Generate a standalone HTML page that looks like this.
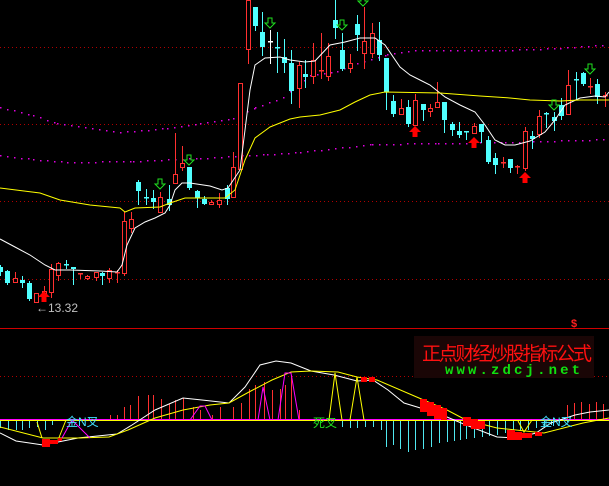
<!DOCTYPE html>
<html><head><meta charset="utf-8"><style>
html,body{margin:0;padding:0;background:#000;width:609px;height:486px;overflow:hidden}
svg{display:block}
</style></head><body>
<svg id="s" width="609" height="486" xmlns="http://www.w3.org/2000/svg" style="background:#000">
<g stroke="#b00000" stroke-width="1" stroke-dasharray="1,3">
<line x1="0" y1="47.5" x2="609" y2="47.5"/><line x1="0" y1="124.5" x2="609" y2="124.5"/>
<line x1="0" y1="201.5" x2="609" y2="201.5"/><line x1="0" y1="279.5" x2="609" y2="279.5"/>
<line x1="0" y1="376.5" x2="414" y2="376.5"/><line x1="594" y1="376.5" x2="609" y2="376.5"/>
</g>
<g id="mag" fill="#e000e0"></g>
<g id="cand"></g>
<polyline fill="none" stroke="#ffffff" stroke-width="1" points="0,239 15,247 30,255 45,265 55,270 70,270 100,271 117,272 122,265 127,245 135,228 145,222 155,218 165,213 170,205 175,190 182,183 190,183 210,186 222,190 228,188 240,170 245,130 250,90 255,65 265,58 280,57 290,60 305,62 315,61 330,45 345,42 360,38 375,38 385,45 400,67 410,75 420,80 430,85 445,97 460,105 475,112 485,125 495,140 505,145 515,145 530,141 545,132 555,120 565,105 580,98 595,96 605,97 609,92"/>
<polyline fill="none" stroke="#ffff00" stroke-width="1" points="0,188 40,193 60,200 90,205 110,207 120,208 125,212 135,208 160,207 170,203 185,198 225,198 235,190 245,160 255,138 270,127 290,119 300,117 320,115 340,110 355,102 370,95 385,92 440,93 480,96 510,98 530,100 560,101 580,100 609,100"/>
<g id="arr"></g>
<text x="36" y="312" fill="#c0c0c0" font-family="Liberation Sans, sans-serif" font-size="12">←13.32</text>
<line x1="0" y1="328.5" x2="609" y2="328.5" stroke="#d00000" stroke-width="1"/>
<text x="571" y="327" fill="#ff2020" font-family="Liberation Sans, sans-serif" font-size="11" font-weight="bold">$</text>
<g id="hist"></g>
<line x1="0" y1="420.5" x2="609" y2="420.5" stroke="#ffff00" stroke-width="1"/>
<line x1="0" y1="419.5" x2="609" y2="419.5" stroke="#ff00ff" stroke-width="1"/>
<g fill="none" stroke-width="1">
<polyline stroke="#ffffff" points="0,433 16,441 43,445 58,442 78,438 117,434 132,425 155,410 183,398 202,400 229,403 245,387 260,365 276,361 291,363 311,371 334,375 357,381 373,380 388,390 404,403 427,410 447,417 466,425 497,437 517,438 536,433 551,423 575,415 590,412 609,410"/>
<polyline stroke="#ffff00" points="0,427 43,438 78,438 109,437 128,430 155,418 183,410 210,405 229,403 249,392 272,380 291,372 311,371 338,372 357,377 377,380 419,398 447,410 466,420 497,428 544,433 583,423 609,418"/>
<polyline stroke="#ff00ff" points="62,438 72,420 90,438"/>
<polyline stroke="#ff00ff" points="190,420 200,406 205,406 212,420"/>
<polyline stroke="#ff00ff" points="258,420 263,387 270,420"/>
<polyline stroke="#ff00ff" points="278,420 285,373 291,373 299,420"/>
<polyline stroke="#ffff00" points="329,420 335,373 342,420"/>
<polyline stroke="#ffff00" points="350,420 357,377 364,420"/>
<polyline stroke="#ffff00" points="37,422 42,438"/>
<polyline stroke="#ffff00" points="58,440 66,420"/>
<polyline stroke="#ffff00" points="518,421 524,432 532,420"/>
</g>
<g fill="#ff0000">
<rect x="42" y="439" width="8" height="8"/><rect x="50" y="440" width="8" height="4"/><rect x="58" y="438" width="4" height="3"/>
<rect x="361" y="377" width="6" height="5"/><rect x="369" y="377" width="6" height="5"/>
<rect x="420" y="399" width="7" height="13"/><rect x="427" y="402" width="7" height="14"/><rect x="434" y="405" width="7" height="14"/><rect x="441" y="408" width="6" height="12"/>
<rect x="463" y="417" width="8" height="9"/><rect x="471" y="419" width="7" height="10"/><rect x="478" y="421" width="7" height="8"/>
<rect x="507" y="430" width="8" height="10"/><rect x="515" y="432" width="7" height="8"/><rect x="522" y="433" width="10" height="5"/><rect x="535" y="432" width="7" height="4"/>
</g>
<g font-family="Liberation Sans, 'Noto Sans CJK SC', sans-serif" font-size="12">
<text x="66" y="426" fill="#40e0ff">金N叉</text>
<text x="540" y="426" fill="#40e0ff">金N叉</text>
<text x="313" y="427" fill="#20e020">死叉</text>
</g>
<rect x="414" y="336" width="180" height="42" fill="#1a0606"/>
<text x="422" y="360" fill="#ff1010" font-family="'Noto Sans CJK SC', sans-serif" font-size="19" textLength="170">正点财经炒股指标公式</text>
<text x="445" y="374" fill="#10e010" font-family="Liberation Mono, monospace" font-size="14" font-weight="bold" textLength="135" lengthAdjust="spacing">www.zdcj.net</text>
</svg>
<script>
var NS="http://www.w3.org/2000/svg";
function el(p,t,a){var e=document.createElementNS(NS,t);for(var k in a)e.setAttribute(k,a[k]);p.appendChild(e);return e;}
var C=[[0,'c',267,272,265,275],[7,'c',271,283,270,284],[15,'r',278,282,272,282],[22,'c',280,283,276,287],[29,'c',283,299,281,300],[36,'r',293,302,293,302],[44,'r',291,293,286,293],[51,'r',269,292,264,297],[58,'r',263,275,262,280],[66,'c',264,265,260,268],[73,'c',267,269,267,284],[80,'r',273,274,273,278],[87,'r',276,278,275,279],[96,'r',272,277,272,280],[102,'c',273,276,272,284],[109,'r',270,278,268,282],[117,'r',272,273,270,282],[124,'r',221,273,212,275],[131,'r',219,228,212,232],[138,'c',182,191,180,204],[146,'c',197,198,189,204],[153,'c',198,202,190,208],[160,'r',197,212,192,212],[169,'c',199,205,185,210],[175,'r',174,183,133,183],[182,'r',163,167,146,170],[189,'c',167,188,167,189],[197,'c',191,198,190,207],[204,'c',199,204,196,204],[211,'r',202,204,200,204],[219,'r',200,204,193,207],[227,'c',188,199,185,204],[233,'r',167,197,152,197],[240,'r',83,169,83,169],[248,'r',0,49,0,63],[255,'c',7,26,7,30],[262,'c',32,47,12,55],[270,'w',41,41,30,63],[277,'c',47,48,32,72],[284,'c',57,63,39,72],[291,'c',63,91,50,103],[299,'r',65,88,62,107],[305,'c',74,77,60,87],[313,'r',60,76,43,83],[321,'r',70,70,33,78],[328,'r',56,76,43,80],[335,'c',20,28,0,38],[342,'c',50,69,33,70],[350,'r',63,68,54,72],[357,'c',24,35,15,50],[364,'r',41,53,7,68],[372,'r',33,53,23,57],[379,'c',40,55,22,60],[386,'c',58,92,58,109],[393,'c',101,114,95,116],[401,'r',108,114,99,114],[408,'c',107,124,100,126],[415,'r',100,125,94,125],[423,'c',104,110,104,120],[430,'r',108,111,104,116],[437,'r',102,107,82,107],[444,'c',102,120,102,132],[452,'c',124,130,122,135],[459,'c',131,135,122,137],[466,'c',131,132,131,139],[474,'r',126,133,123,133],[481,'c',124,132,124,142],[488,'c',140,162,136,163],[495,'c',158,165,153,173],[503,'r',162,163,157,167],[510,'c',159,168,159,172],[517,'r',166,167,165,173],[525,'r',131,168,127,170],[532,'c',136,139,131,148],[539,'r',116,134,110,137],[546,'c',113,114,112,127],[554,'c',117,121,112,130],[561,'c',105,116,98,119],[568,'r',85,114,70,114],[576,'c',79,80,72,99],[583,'c',73,84,72,85],[590,'r',86,86,78,93],[597,'c',84,97,79,103],[605,'r',95,95,92,106]];
var g=document.getElementById('cand');
C.forEach(function(c){var x=c[0],col=c[1]=='r'?'#ff3030':(c[1]=='c'?'#50ffff':'#ffffff');
el(g,'line',{x1:x+.5,y1:c[4],x2:x+.5,y2:c[5]+1,stroke:col});
var h=c[3]-c[2];
if(h<2){el(g,'rect',{x:x-2,y:c[2],width:5,height:1.5,fill:col});}
else if(c[1]=='r'){el(g,'rect',{x:x-1.5,y:c[2]+.5,width:4,height:h,fill:'#000',stroke:col});}
else{el(g,'rect',{x:x-2,y:c[2],width:5,height:h,fill:col});}
});
var m=document.getElementById('mag');
function dots(pts){for(var i=0;i<pts.length-1;i++){var a=pts[i],b=pts[i+1];for(var x=a[0];x<b[0];x+=7){var y=a[1]+(b[1]-a[1])*(x-a[0])/(b[0]-a[0]);el(m,'rect',{x:x,y:Math.round(y),width:1.5,height:1.5});}}}
dots([[0,107],[33,115],[57,123],[120,132],[167,128],[200,123],[233,118],[255,107],[283,97],[310,75],[337,71],[357,63],[387,54],[415,50],[505,50],[560,48],[609,44]]);
dots([[0,155],[33,159],[67,162],[133,161],[200,158],[267,154],[300,152],[372,144],[438,143],[505,142],[609,139]]);
var a=document.getElementById('arr');
function down(x,y){el(a,'path',{d:'M'+(x-2)+','+y+'h4v5h3l-5,5l-5,-5h3z',fill:'none',stroke:'#20e020'});}
function up(x,y){el(a,'path',{d:'M'+x+','+y+'l-6,6h3.5v5h5v-5h3.5z',fill:'#ff0000'});}
[[160,179],[189,155],[270,18],[342,20],[363,-4],[554,100],[590,64]].forEach(function(p){down(p[0],p[1]);});
[[44,291],[415,126],[474,137],[525,172]].forEach(function(p){up(p[0],p[1]);});
var h=document.getElementById('hist');
var R=[[124,407],[130,405],[138,396],[148,395],[153,395],[161,399],[169,404],[175,400],[183,398],[193,407],[200,410],[212,415],[220,407],[233,407],[241,403],[249,389],[255,385],[264,382],[272,390],[280,389],[285,385],[291,375],[299,410],[110,415],[117,415],[567,405],[574,403],[581,402],[589,404],[596,402],[603,404]];
R.forEach(function(r){el(h,'line',{x1:r[0]+.5,y1:r[1],x2:r[0]+.5,y2:420,stroke:'#ff3030'});});
var B=[[0,428],[8,430],[16,430],[22,430],[29,428],[37,427],[45,430],[52,425],[342,427],[350,428],[357,428],[365,427],[373,427],[381,430],[386,447],[393,445],[400,449],[408,452],[415,450],[423,449],[431,447],[439,443],[447,442],[454,441],[460,440],[466,439],[474,438],[482,437],[489,436],[497,435],[505,433],[513,432],[520,431],[528,430],[536,428],[544,426],[551,425],[559,423],[567,422]];
B.forEach(function(r){el(h,'line',{x1:r[0]+.5,y1:420,x2:r[0]+.5,y2:r[1],stroke:'#50e8f0'});});
</script>
</body></html>
